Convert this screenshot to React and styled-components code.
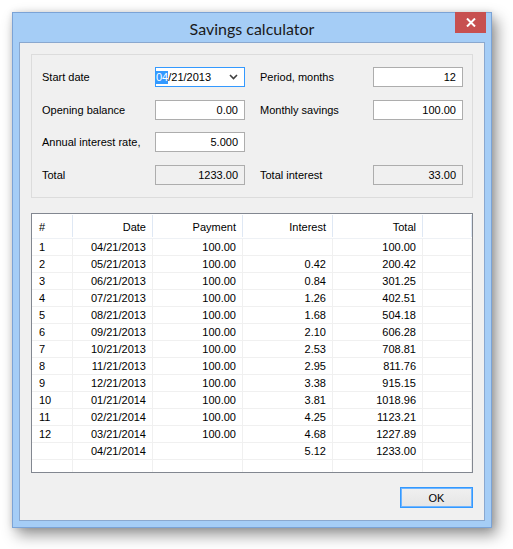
import React from "react";
import styled, { createGlobalStyle } from "styled-components";

const Global = createGlobalStyle`
  html, body { margin: 0; padding: 0; background: #ffffff; }
  body { font-family: "Liberation Sans", Arial, sans-serif; font-size: 11px; color: #000; }
  * { box-sizing: border-box; }
`;

const Page = styled.div`
  padding: 12px 0 0 12px;
  width: 513px;
  height: 549px;
`;

const Window = styled.div`
  position: relative;
  width: 480px;
  background: #a5cdf6;
  border: 1px solid #7ba3d6;
  padding: 0 6px 6px 6px;
  box-shadow: 5px 7px 14px rgba(0, 0, 0, 0.42), 0 0 6px rgba(0, 0, 0, 0.12);
`;

const TitleBar = styled.div`
  height: 29px;
  display: flex;
  align-items: center;
  justify-content: center;
  font-family: "Lato", "Noto Sans", sans-serif;
  font-size: 16px;
  color: #1a1a1a;
  padding-top: 1px;
`;

const CloseButton = styled.div`
  position: absolute;
  top: -1px;
  right: 5px;
  width: 31px;
  height: 21px;
  background: #c75050;
  display: flex;
  align-items: center;
  justify-content: center;
`;

const Client = styled.div`
  background: #f0f0f0;
  border: 1px solid #8aa8cf;
  padding: 11px 11px 12px 11px;
  display: flex;
  flex-direction: column;
`;

const Group = styled.div`
  border: 1px solid #dcdcdc;
  padding: 12px 10px 12px 10px;
  display: grid;
  grid-template-columns: 113px 90px 15px 113px 90px;
  grid-template-rows: 33px 32px 33px 20px;
  align-items: start;
`;

const Label = styled.div`
  height: 20px;
  display: flex;
  align-items: center;
  white-space: nowrap;
  grid-column: ${(p) => p.col};
  grid-row: ${(p) => p.row};
`;

const Field = styled.div`
  height: 20px;
  border: 1px solid ${(p) => (p.focused ? "#3399ff" : "#adadad")};
  background: ${(p) => (p.readOnly ? "#f0f0f0" : "#ffffff")};
  display: flex;
  align-items: center;
  justify-content: ${(p) => (p.left ? "flex-start" : "flex-end")};
  padding: ${(p) => (p.left ? "0 6px 0 0" : "0 6px 0 4px")};
  grid-column: ${(p) => p.col};
  grid-row: ${(p) => p.row};
`;

const DateText = styled.span`
  flex: 1;
  display: flex;
  align-items: center;
`;

const Selected = styled.span`
  background: #3399ff;
  color: #fff;
  line-height: 13px;
`;

const Table = styled.div`
  margin-top: 15px;
  height: 260px;
  border: 1px solid #828790;
  background: #fff;
  display: flex;
  flex-direction: column;
`;

const cols = "41px 80px 90px 90px 90px 1fr";

const HeaderRow = styled.div`
  display: grid;
  grid-template-columns: ${cols};
  height: 25px;
  border-bottom: 1px solid #eef1f5;
`;

const HeaderCell = styled.div`
  display: flex;
  align-items: center;
  justify-content: ${(p) => (p.left ? "flex-start" : "flex-end")};
  padding: ${(p) => (p.left ? "0 0 0 7px" : "0 6px 0 0")};
  border-right: 1px solid #dfe8f4;
  margin: 1px 0;
  padding-top: 1px;
`;

const Row = styled.div`
  display: grid;
  grid-template-columns: ${cols};
  height: 17px;
`;

const Cell = styled.div`
  display: flex;
  align-items: center;
  justify-content: ${(p) => (p.left ? "flex-start" : "flex-end")};
  padding: ${(p) => (p.left ? "0 0 0 7px" : "0 6px 0 0")};
  border-right: 1px solid #f0f0f0;
  border-bottom: 1px solid #f0f0f0;
  white-space: nowrap;
`;

const Filler = styled.div`
  flex: 1;
  display: grid;
  grid-template-columns: ${cols};
`;

const FillerCell = styled.div`
  border-right: 1px solid #f0f0f0;
`;

const Footer = styled.div`
  margin-top: 14px;
  display: flex;
  justify-content: flex-end;
`;

const OkButton = styled.div`
  width: 73px;
  height: 21px;
  border: 1px solid #3399ff;
  box-shadow: inset 0 0 0 1px #6fb5ff;
  background: linear-gradient(#f0f0f0, #e5e5e5);
  display: flex;
  align-items: center;
  justify-content: center;
`;

const rows = [
  ["1", "04/21/2013", "100.00", "", "100.00"],
  ["2", "05/21/2013", "100.00", "0.42", "200.42"],
  ["3", "06/21/2013", "100.00", "0.84", "301.25"],
  ["4", "07/21/2013", "100.00", "1.26", "402.51"],
  ["5", "08/21/2013", "100.00", "1.68", "504.18"],
  ["6", "09/21/2013", "100.00", "2.10", "606.28"],
  ["7", "10/21/2013", "100.00", "2.53", "708.81"],
  ["8", "11/21/2013", "100.00", "2.95", "811.76"],
  ["9", "12/21/2013", "100.00", "3.38", "915.15"],
  ["10", "01/21/2014", "100.00", "3.81", "1018.96"],
  ["11", "02/21/2014", "100.00", "4.25", "1123.21"],
  ["12", "03/21/2014", "100.00", "4.68", "1227.89"],
  ["", "04/21/2014", "", "5.12", "1233.00"],
];

export default function App() {
  return (
    <Page>
      <Global />
      <Window>
        <TitleBar>Savings calculator</TitleBar>
        <CloseButton>
          <svg width="10" height="9" viewBox="0 0 10 9">
            <path d="M1 0.5 L9 8.5 M9 0.5 L1 8.5" stroke="#fff" strokeWidth="2" />
          </svg>
        </CloseButton>
        <Client>
          <Group>
            <Label col={1} row={1}>Start date</Label>
            <Field col={2} row={1} focused left>
              <DateText>
                <Selected>04</Selected>/21/2013
              </DateText>
              <svg width="9" height="6" viewBox="0 0 9 6">
                <path d="M1 1 L4.5 4.5 L8 1" stroke="#404040" strokeWidth="1.6" fill="none" />
              </svg>
            </Field>
            <Label col={4} row={1}>Period, months</Label>
            <Field col={5} row={1}>12</Field>

            <Label col={1} row={2}>Opening balance</Label>
            <Field col={2} row={2}>0.00</Field>
            <Label col={4} row={2}>Monthly savings</Label>
            <Field col={5} row={2}>100.00</Field>

            <Label col={1} row={3}>Annual interest rate,</Label>
            <Field col={2} row={3}>5.000</Field>

            <Label col={1} row={4}>Total</Label>
            <Field col={2} row={4} readOnly>1233.00</Field>
            <Label col={4} row={4}>Total interest</Label>
            <Field col={5} row={4} readOnly>33.00</Field>
          </Group>

          <Table>
            <HeaderRow>
              <HeaderCell left>#</HeaderCell>
              <HeaderCell>Date</HeaderCell>
              <HeaderCell>Payment</HeaderCell>
              <HeaderCell>Interest</HeaderCell>
              <HeaderCell>Total</HeaderCell>
              <HeaderCell />
            </HeaderRow>
            {rows.map((r, i) => (
              <Row key={i}>
                <Cell left>{r[0]}</Cell>
                <Cell>{r[1]}</Cell>
                <Cell>{r[2]}</Cell>
                <Cell>{r[3]}</Cell>
                <Cell>{r[4]}</Cell>
                <Cell />
              </Row>
            ))}
            <Filler>
              <FillerCell />
              <FillerCell />
              <FillerCell />
              <FillerCell />
              <FillerCell />
              <FillerCell />
            </Filler>
          </Table>

          <Footer>
            <OkButton>OK</OkButton>
          </Footer>
        </Client>
      </Window>
    </Page>
  );
}
